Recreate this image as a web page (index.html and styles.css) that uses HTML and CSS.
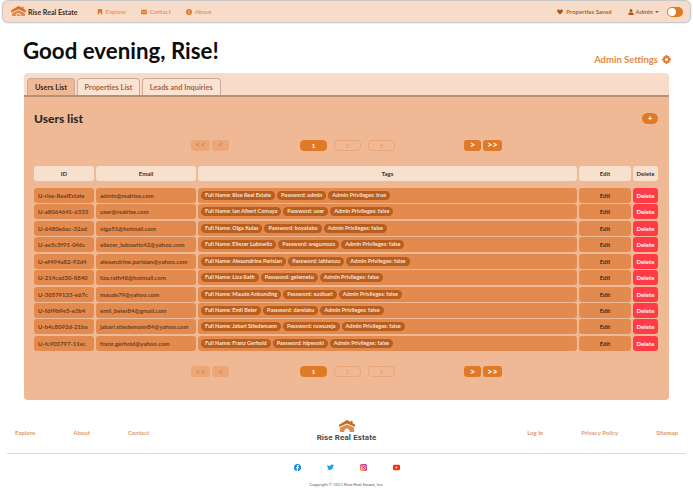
FILE: index.html
```html
<!DOCTYPE html>
<html lang="en">
<head>
    <meta charset="UTF-8">
    <meta name="viewport" content="width=device-width, initial-scale=1.0">
    <title>Rise Real Estate</title>
    <link rel="stylesheet" href="styles.css">
</head>
<body>
    <!-- Top bar -->
    <nav class="navbar">
        <div class="nav-left">
            <a class="brand">
                <svg class="brand-logo" viewBox="0 0 32 24"><path d="M16 0 L24 4 V1.500 H27 V6 L32 9.500 V14 L16 7 L0 14 V9.500Z" fill="#d9701f"/><path d="M2 15 L16 9 L30 15 V22 H22 C21 17 19 15.500 16 15.500 C13 15.500 11 17 10 22 H2Z" fill="#e08a4b"/><path d="M12 22 C12.500 19 14 17.500 16 17.500 C18 17.500 19.500 19 20 22Z" fill="#e08a4b"/></svg>
                Rise Real Estate
            </a>
            <a class="nav-link">
                <svg viewBox="0 0 12 14"><path d="M1 0 H11 V14 L8 11.500 V9 H4 V11.500 L1 14Z" fill="#dc7a2e"/></svg>
                Explore
            </a>
            <a class="nav-link">
                <svg viewBox="0 0 14 11"><path d="M0 1 Q0 0 1 0 H13 Q14 0 14 1 V2 L7 6 L0 2Z M0 3.500 L7 7.500 L14 3.500 V10 Q14 11 13 11 H1 Q0 11 0 10Z" fill="#dc7a2e"/></svg>
                Contact
            </a>
            <a class="nav-link">
                <svg viewBox="0 0 14 14"><path fill-rule="evenodd" d="M7 0 A7 7 0 1 1 7 14 A7 7 0 1 1 7 0Z M6 3 V5 H8 V3Z M6 6 V11 H8 V6Z" fill="#dc7a2e"/></svg>
                About
            </a>
        </div>
        <div class="nav-right">
            <a class="nav-link dark">
                <svg viewBox="0 0 14 12"><path d="M7 12 L1 6 C-1 3 1 0 3.500 0 C5 0 6.300 .8 7 2 C7.700 .8 9 0 10.500 0 C13 0 15 3 13 6Z" fill="#a9541b"/></svg>
                Properties Saved
            </a>
            <a class="nav-link dark user">
                <svg viewBox="0 0 12 14"><path d="M6 0 A3.300 3.300 0 1 1 6 7 A3.300 3.300 0 1 1 6 0Z M0 14 V11.500 C0 9.500 2 8 4 8 H8 C10 8 12 9.500 12 11.500 V14Z" fill="#a9541b"/></svg>
                Admin
                <span class="caret"></span>
            </a>
            <span class="toggle"><span class="toggle-knob"></span></span>
        </div>
    </nav>

    <main class="page">
        <div class="page-head">
            <h1>Good evening, Rise!</h1>
            <a class="admin-settings">
                Admin Settings
                <svg viewBox="0 0 24 24"><path fill-rule="evenodd" d="M10 0 H14 L15 4 L18 2.500 L21 5.500 L19.500 8.500 L24 10 V14 L19.500 15.500 L21 18.500 L18 21.500 L15 20 L14 24 H10 L9 20 L6 21.500 L3 18.500 L4.500 15.500 L0 14 V10 L4.500 8.500 L3 5.500 L6 2.500 L9 4Z M12 8 A4 4 0 1 0 12 16 A4 4 0 1 0 12 8Z" fill="#dc7a2e"/></svg>
            </a>
        </div>

        <section class="panel">
            <div class="tabs">
                <button class="tab active">Users List</button>
                <button class="tab">Properties List</button>
                <button class="tab">Leads and Inquiries</button>
            </div>
            <div class="panel-body">
                <div class="list-head">
                    <h2>Users list</h2>
                    <button class="add-btn">+</button>
                </div>

                <div class="pager">
                    <button class="pg pg-off wide">&lt;&lt;</button>
                    <button class="pg pg-off">&lt;</button>
                    <div class="pager-pages">
                        <button class="pg-num current">1</button>
                        <button class="pg-num">2</button>
                        <button class="pg-num">3</button>
                    </div>
                    <button class="pg">&gt;</button>
                    <button class="pg wide">&gt;&gt;</button>
                </div>

                <div class="users">
                    <div class="th">ID</div>
                    <div class="th">Email</div>
                    <div class="th">Tags</div>
                    <div class="th">Edit</div>
                    <div class="th">Delete</div>

                    <div class="td">U-rise-RealEstate</div>
                    <div class="td">admin@realrise.com</div>
                    <div class="td tags"><span class="tag">Full Name: Rise Real Estate</span><span class="tag">Password: admin</span><span class="tag">Admin Privileges: true</span></div>
                    <div class="td center">Edit</div>
                    <div class="td del">Delete</div>

                    <div class="td">U-a8064641-6333</div>
                    <div class="td">user@realrise.com</div>
                    <div class="td tags"><span class="tag">Full Name: Ian Albert Comaya</span><span class="tag">Password: user</span><span class="tag">Admin Privileges: false</span></div>
                    <div class="td center">Edit</div>
                    <div class="td del">Delete</div>

                    <div class="td">U-6480e6ac-32ad</div>
                    <div class="td">olga51@hotmail.com</div>
                    <div class="td tags"><span class="tag">Full Name: Olga Kulas</span><span class="tag">Password: boyatabo</span><span class="tag">Admin Privileges: false</span></div>
                    <div class="td center">Edit</div>
                    <div class="td del">Delete</div>

                    <div class="td">U-ae5c5f91-046c</div>
                    <div class="td">eliezer_lubowitz42@yahoo.com</div>
                    <div class="td tags"><span class="tag">Full Name: Eliezer Lubowitz</span><span class="tag">Password: wegumozo</span><span class="tag">Admin Privileges: false</span></div>
                    <div class="td center">Edit</div>
                    <div class="td del">Delete</div>

                    <div class="td">U-ef494a82-92d4</div>
                    <div class="td">alexandrine.parisian@yahoo.com</div>
                    <div class="td tags"><span class="tag">Full Name: Alexandrine Parisian</span><span class="tag">Password: lahiwozu</span><span class="tag">Admin Privileges: false</span></div>
                    <div class="td center">Edit</div>
                    <div class="td del">Delete</div>

                    <div class="td">U-214cad30-8840</div>
                    <div class="td">liza.rath48@hotmail.com</div>
                    <div class="td tags"><span class="tag">Full Name: Liza Rath</span><span class="tag">Password: gelemetu</span><span class="tag">Admin Privileges: false</span></div>
                    <div class="td center">Edit</div>
                    <div class="td del">Delete</div>

                    <div class="td">U-30579133-e67c</div>
                    <div class="td">maude79@yahoo.com</div>
                    <div class="td tags"><span class="tag">Full Name: Maude Ankunding</span><span class="tag">Password: xudisari</span><span class="tag">Admin Privileges: false</span></div>
                    <div class="td center">Edit</div>
                    <div class="td del">Delete</div>

                    <div class="td">U-f6f9b9e5-e3b4</div>
                    <div class="td">emil_beier84@gmail.com</div>
                    <div class="td tags"><span class="tag">Full Name: Emil Beier</span><span class="tag">Password: darelaku</span><span class="tag">Admin Privileges: false</span></div>
                    <div class="td center">Edit</div>
                    <div class="td del">Delete</div>

                    <div class="td">U-b4c8092d-21ba</div>
                    <div class="td">jabari.stiedemann84@yahoo.com</div>
                    <div class="td tags"><span class="tag">Full Name: Jabari Stiedemann</span><span class="tag">Password: ruwuzeja</span><span class="tag">Admin Privileges: false</span></div>
                    <div class="td center">Edit</div>
                    <div class="td del">Delete</div>

                    <div class="td">U-fc903797-11ec</div>
                    <div class="td">franz.gerhold@yahoo.com</div>
                    <div class="td tags"><span class="tag">Full Name: Franz Gerhold</span><span class="tag">Password: hipevoki</span><span class="tag">Admin Privileges: false</span></div>
                    <div class="td center">Edit</div>
                    <div class="td del">Delete</div>
                </div>

                <div class="pager bottom">
                    <button class="pg pg-off wide">&lt;&lt;</button>
                    <button class="pg pg-off">&lt;</button>
                    <div class="pager-pages">
                        <button class="pg-num current">1</button>
                        <button class="pg-num">2</button>
                        <button class="pg-num">3</button>
                    </div>
                    <button class="pg">&gt;</button>
                    <button class="pg wide">&gt;&gt;</button>
                </div>
            </div>
        </section>
    </main>

    <footer class="footer">
        <div class="footer-top">
            <div class="footer-links">
                <a>Explore</a>
                <a>About</a>
                <a>Contact</a>
            </div>
            <div class="footer-brand">
                <svg viewBox="0 0 32 24"><path d="M16 0 L24 4 V1.500 H27 V6 L32 9.500 V14 L16 7 L0 14 V9.500Z" fill="#c96a1e"/><path d="M2 15 L16 9 L30 15 V24 H22 C21 19 19 17 16 17 C13 17 11 19 10 24 H2Z" fill="#e08a4b"/></svg>
                <span>Rise Real Estate</span>
            </div>
            <div class="footer-links right">
                <a>Log In</a>
                <a>Privacy Policy</a>
                <a>Sitemap</a>
            </div>
        </div>
        <div class="socials">
            <svg viewBox="0 0 16 16"><circle cx="8" cy="8" r="8" fill="#1588e8"/><path d="M9 16 V9.500 H11 L11.400 7 H9 V5.500 C9 4.800 9.300 4.300 10.300 4.300 H11.500 V2.200 C10.900 2.100 10.300 2 9.700 2 C7.700 2 6.500 3.200 6.500 5.200 V7 H4.500 V9.500 H6.500 V16Z" fill="#fff"/></svg>
            <svg viewBox="0 0 16 14"><path d="M16 1.700 C15.400 2 14.800 2.100 14.100 2.200 C14.800 1.800 15.300 1.100 15.600 .4 C14.900 .8 14.200 1.100 13.500 1.200 C12.900 .5 12 0 11 0 C9.200 0 7.700 1.500 7.700 3.300 C7.700 3.600 7.700 3.800 7.800 4 C5 3.900 2.600 2.600 1.100 .6 C.8 1.100 .7 1.600 .7 2.200 C.7 3.300 1.300 4.300 2.200 4.900 C1.600 4.900 1.100 4.700 .7 4.500 C.7 6.100 1.800 7.500 3.300 7.800 C2.800 7.900 2.300 8 1.800 7.900 C2.200 9.200 3.400 10.200 4.900 10.200 C3.400 11.400 1.700 12 0 11.800 C1.500 12.800 3.200 13.300 5 13.300 C11 13.300 14.400 8.200 14.400 3.800 V3.400 C15 3 15.600 2.400 16 1.700Z" fill="#1da1f2"/></svg>
            <svg viewBox="0 0 16 16"><defs><linearGradient id="ig" x1="0" y1="1" x2="1" y2="0"><stop offset="0" stop-color="#fdb32b"/><stop offset=".5" stop-color="#e8355f"/><stop offset="1" stop-color="#7a3bd0"/></linearGradient></defs><rect width="16" height="16" rx="4" fill="url(#ig)"/><rect x="3" y="3" width="10" height="10" rx="3" fill="none" stroke="#fff" stroke-width="1.200"/><circle cx="8" cy="8" r="2.300" fill="none" stroke="#fff" stroke-width="1.200"/></svg>
            <svg viewBox="0 0 18 14"><rect width="18" height="14" rx="3.500" fill="#f5300f"/><path d="M7 4 L12 7 L7 10Z" fill="#fff"/></svg>
        </div>
        <p class="copyright">Copyright © 2022 Rise Real Estate, Inc.</p>
    </footer>
</body>
</html>
```

FILE: styles.css
```css
/* Page */
* {
    box-sizing: border-box;
}

body {
    margin: 0;
    height: 490px;
    overflow: hidden;
    font-family: 'Lato', sans-serif;
    background: #fff;
    color: #222;
}

/* Top bar */
.navbar {
    display: flex;
    justify-content: space-between;
    align-items: center;
    height: 21px;
    margin: 1px 3px 0 3px;
    padding: 0 7px 0 8px;
    background: #f7dcc9;
    border-radius: 5px;
    box-shadow: 0 0 1.500px 1px #bdbdbd;
}

.nav-left,
.nav-right {
    display: flex;
    align-items: center;
}

.brand {
    display: flex;
    align-items: center;
    gap: 2px;
    font-size: 7px;
    font-weight: 900;
    color: #4b3a2e;
    margin-right: 19px;
}

.brand-logo {
    width: 15px;
    height: 11px;
}

.nav-link {
    display: flex;
    align-items: center;
    gap: 3px;
    font-size: 6px;
    font-weight: 700;
    color: #e39a63;
    margin-right: 15px;
}

.nav-link svg {
    width: 6px;
    height: 6px;
}

.nav-link.dark {
    color: #a86a3e;
    margin-right: 16px;
}

.nav-link.user {
    gap: 2px;
    margin-right: 8px;
}

.caret {
    width: 0;
    height: 0;
    margin-left: 0;
    border: 2px solid transparent;
    border-top: 2.500px solid #a9541b;
    border-bottom: 0;
}

.toggle {
    display: flex;
    align-items: center;
    width: 16px;
    height: 10px;
    padding: 1px;
    border-radius: 5px;
    background: #e07a20;
}

.toggle-knob {
    width: 8px;
    height: 8px;
    border-radius: 50%;
    background: #fff;
}

/* Heading */
.page {
    margin: 0 24px 0 24px;
}

.page-head {
    display: flex;
    justify-content: space-between;
    align-items: flex-end;
    height: 51px;
    padding-bottom: 8px;
}

h1 {
    margin: 0 0 0 -1px;
    font-size: 22.300px;
    font-weight: 700;
    line-height: 28px;
    color: #0d0d0d;
}

.admin-settings {
    display: flex;
    align-items: center;
    gap: 4px;
    font-size: 9.500px;
    font-weight: 700;
    color: #e08a4b;
    margin-right: -2px;
}

.admin-settings svg {
    width: 9px;
    height: 9px;
}

/* Panel */
.panel {
    height: 327px;
    display: flex;
    flex-direction: column;
    background: #f7dcc9;
    border-radius: 4px;
    overflow: hidden;
}

.tabs {
    display: flex;
    gap: 1.500px;
    padding: 5px 0 0 3px;
    height: 24px;
    border-bottom: 2px solid #b78f74;
}

.tab {
    height: 17px;
    padding: 0 7px;
    font-family: inherit;
    font-size: 7.400px;
    font-weight: 700;
    color: #a7653a;
    background: #fae3d3;
    border: 1px solid #c9ab97;
    border-bottom: 0;
    border-radius: 4px 4px 0 0;
}

.tab.active {
    width: 48px;
    padding: 0;
    color: #3b2a1e;
    background: #f0b995;
}

.panel-body {
    flex: 1;
    padding: 12px 11px 0 10px;
    background: #f0b995;
}

.list-head {
    display: flex;
    justify-content: space-between;
    align-items: center;
    height: 18px;
}

h2 {
    margin: 0;
    font-size: 12px;
    font-weight: 900;
    color: #2f2a26;
}

.add-btn {
    width: 16px;
    height: 11px;
    padding: 0;
    font-family: inherit;
    font-size: 8px;
    font-weight: 900;
    line-height: 10px;
    color: #fff;
    background: #df7a28;
    border: none;
    border-radius: 6px;
}

/* Pagination */
.pager {
    display: flex;
    align-items: center;
    gap: 2px;
    height: 12px;
    margin-top: 12px;
    padding-left: 157px;
}

.pager.bottom {
    margin-top: 15px;
}

.pager-pages {
    display: flex;
    gap: 7px;
    margin: 0 67px 0 69px;
}

.pg {
    width: 17px;
    height: 11px;
    padding: 0;
    font-family: 'Lato', sans-serif;
    font-size: 9px;
    font-weight: 700;
    line-height: 10px;
    color: #fff;
    background: #df7a28;
    border: none;
    border-radius: 3px;
}

.pg.wide {
    width: 19px;
}

.pg-off {
    color: #df8a50;
    background: #eba777;
}

.pg-num {
    width: 27px;
    height: 11px;
    padding: 0;
    font-family: inherit;
    font-size: 6px;
    font-weight: 700;
    line-height: 9px;
    color: #e9a06b;
    background: transparent;
    border: 1px solid #eba777;
    border-radius: 4px;
}

.pg-num.current {
    color: #fff;
    background: #df7a28;
    border-color: #df7a28;
}

/* Users table */
.users {
    display: grid;
    grid-template-columns: 60px 100px 379px 52px 25px;
    grid-template-rows: 20.550px;
    grid-auto-rows: 15px;
    column-gap: 2px;
    row-gap: 1.450px;
    margin-top: 15px;
}

.th,
.td {
    display: flex;
    align-items: center;
    font-size: 6px;
    font-weight: 700;
    border-radius: 3px;
    white-space: nowrap;
    overflow: hidden;
}

.th {
    height: 15px;
    justify-content: center;
    color: #3c3029;
    background: #f8e0cf;
}

.td {
    padding-left: 4px;
    color: #6e3f1e;
    background: #e38a4e;
}

.center {
    justify-content: center;
    padding-left: 0;
    color: #3c2a1e;
}

.del {
    justify-content: center;
    padding-left: 0;
    color: #fff;
    background: #ff3b47;
}

.tags {
    gap: 2px;
    padding-left: 3px;
}

.tag {
    height: 9px;
    padding: 0 4px;
    font-size: 5.500px;
    line-height: 9px;
    color: #fbe3d2;
    background: #b85e1e;
    border-radius: 5px;
}

/* Footer */
.footer {
    margin-top: 20px;
}

.footer-top {
    display: grid;
    grid-template-columns: 1fr auto 1fr;
    align-items: start;
    height: 34px;
    margin: 0 7px;
    padding: 0 8px;
    border-bottom: 1px solid #dcdcdc;
}

.footer-links {
    display: flex;
    gap: 38px;
    padding-top: 9px;
    font-size: 6px;
    font-weight: 700;
    color: #dd9a6b;
}

.footer-links.right {
    justify-content: flex-end;
}

.footer-brand {
    display: flex;
    flex-direction: column;
    align-items: center;
}

.footer-brand svg {
    width: 16px;
    height: 12px;
}

.footer-brand span {
    font-family: 'Roboto', sans-serif;
    font-size: 8px;
    font-weight: 700;
    line-height: 11px;
    color: #4a4a4a;
    letter-spacing: .1px;
}

.socials {
    display: flex;
    justify-content: center;
    align-items: center;
    gap: 26px;
    margin-top: 10px;
}

.socials svg {
    width: 7px;
    height: 7px;
}

.copyright {
    margin: 11px 0 0 0;
    font-family: 'Roboto', sans-serif;
    font-size: 4.300px;
    line-height: 6px;
    text-align: center;
    color: #666;
}
```
